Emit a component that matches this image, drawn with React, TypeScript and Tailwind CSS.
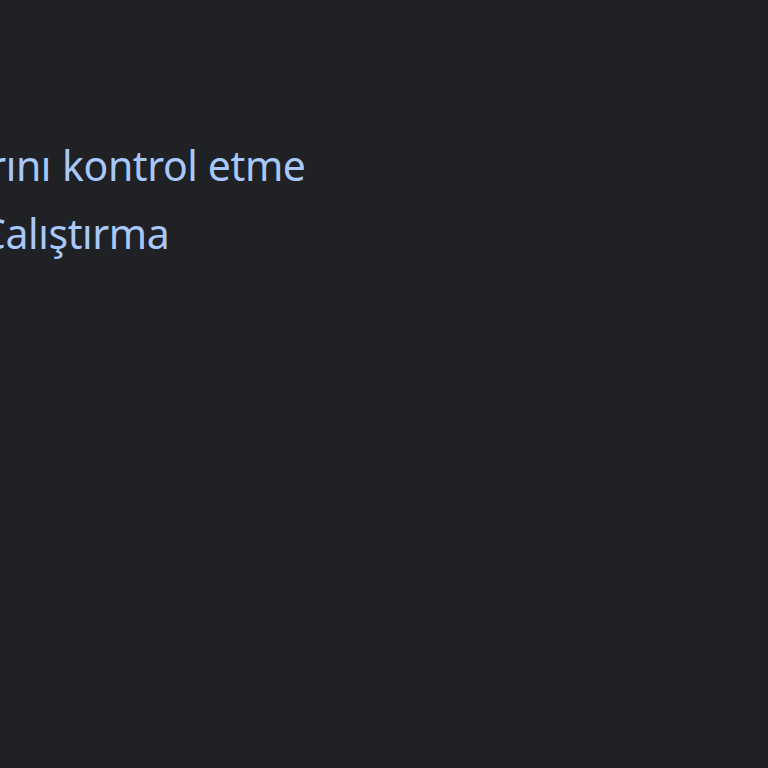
export default function App() {
  return (
    <div className="w-[768px] h-[768px] bg-[#202124] overflow-hidden font-['Noto_Sans','Open_Sans',sans-serif]">
      <div className="pt-[131px] flex flex-col text-[41px] leading-[68px] tracking-[-0.4px] text-[#a8c7fa] whitespace-nowrap">
        <div className="flex">
          <div className="w-[51px] flex justify-end overflow-hidden shrink-0">
            <span className="shrink-0">programlarını</span>
          </div>
          <span className="ml-[11px]">kontrol etme</span>
        </div>
        <div className="ml-[-20px]">Çalıştırma</div>
      </div>
    </div>
  );
}
